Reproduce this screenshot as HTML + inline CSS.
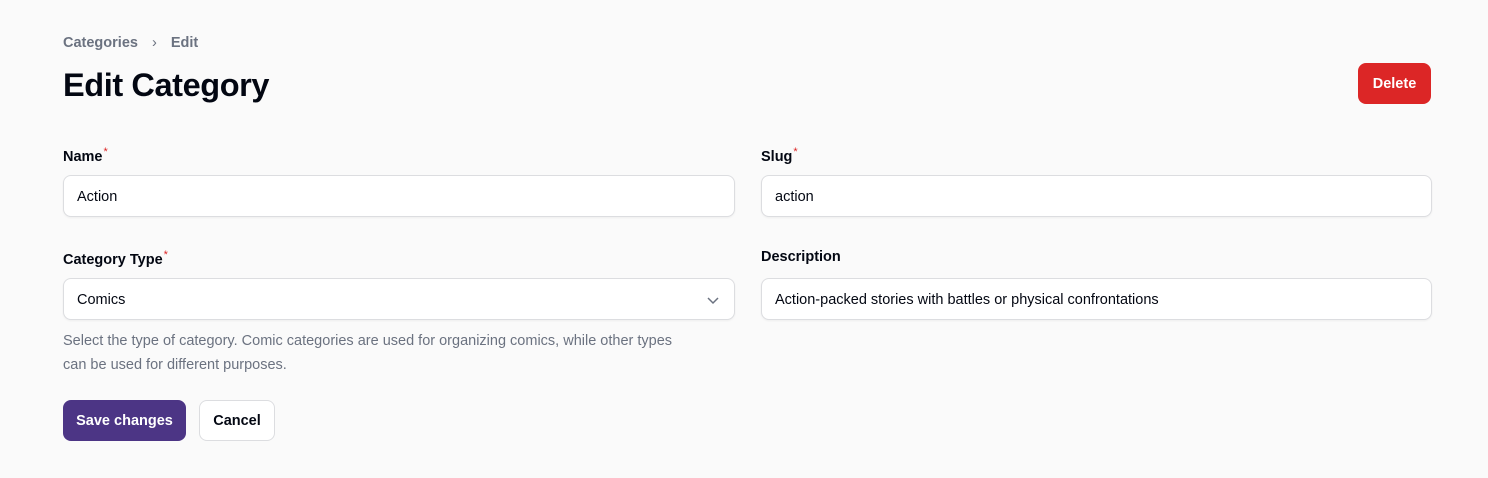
<!DOCTYPE html>
<html><head><style>
body{margin:0;background:#fafafa;font-family:"Liberation Sans",sans-serif;width:1488px;height:478px;position:relative;overflow:hidden;color:#030712}
.a{position:absolute}
.bc{top:35px;left:63px;font-size:14.5px;font-weight:bold;color:#6b7280}
h1{position:absolute;margin:0;top:67px;left:63px;font-size:32.5px;font-weight:bold;letter-spacing:-0.4px;color:#030712}
.lbl{font-size:14.5px;font-weight:bold;color:#030712}
.lbl sup{color:#dc2626;font-size:11px;font-weight:normal;margin-left:1px}
.inp{background:#fff;border:1px solid #dcdde0;border-radius:8px;box-sizing:border-box;height:42px;font-size:14.5px;padding:13px 13px;box-shadow:0 1px 2px rgba(0,0,0,.05)}
.btn{border-radius:8px;box-sizing:border-box;height:41px;font-size:14.5px;font-weight:bold;text-align:center;line-height:43px}
</style></head><body>
<div class="a bc">Categories <span style="margin:0 10px;font-weight:normal">›</span> Edit</div>
<h1>Edit Category</h1>
<div class="a btn" style="left:1358px;top:63px;width:73px;background:#dc2626;color:#fff">Delete</div>
<div class="a lbl" style="left:63px;top:146px">Name<sup>*</sup></div>
<div class="a lbl" style="left:761px;top:146px">Slug<sup>*</sup></div>
<div class="a inp" style="left:63px;top:175px;width:672px">Action</div>
<div class="a inp" style="left:761px;top:175px;width:671px">action</div>
<div class="a lbl" style="left:63px;top:249px">Category Type<sup>*</sup></div>
<div class="a lbl" style="left:761px;top:249px">Description</div>
<div class="a inp" style="left:63px;top:278px;width:672px">Comics
<svg style="position:absolute;right:14px;top:14px" width="14" height="14" viewBox="0 0 14 14"><path d="M2 5l5 5 5-5" fill="none" stroke="#6b7280" stroke-width="1.5"/></svg></div>
<div class="a inp" style="left:761px;top:278px;width:671px">Action-packed stories with battles or physical confrontations</div>
<div class="a" style="left:63px;top:329px;width:625px;font-size:14.5px;line-height:24px;color:#6b7280">Select the type of category. Comic categories are used for organizing comics, while other types can be used for different purposes.</div>
<div class="a btn" style="left:63px;top:400px;width:123px;background:#4c3585;color:#fff">Save changes</div>
<div class="a btn" style="left:199px;top:400px;width:76px;background:#fff;border:1px solid #dcdde0;line-height:41px">Cancel</div>
</body></html>
